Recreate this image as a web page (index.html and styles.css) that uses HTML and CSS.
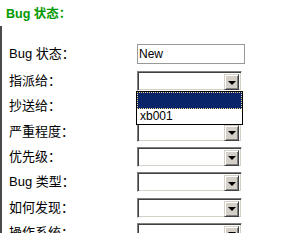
FILE: index.html
```html
<!DOCTYPE html>
<html>
<head>
<meta charset="utf-8">
<link rel="stylesheet" href="styles.css">
</head>
<body>
<div class="title">Bug 状态：</div>
<div class="panel">
  <div class="form">
    <span class="label">Bug 状态：</span>
    <div class="textbox">New</div>

    <span class="label">指派给：</span>
    <div class="cell">
      <div class="combo"><span class="btn"><span class="arrow"></span></span></div>
      <div class="dropdown">
        <div class="opt active"></div>
        <div class="opt">xb001</div>
      </div>
    </div>

    <span class="label">抄送给：</span>
    <div class="cell"><div class="combo"><span class="btn"><span class="arrow"></span></span></div></div>

    <span class="label">严重程度：</span>
    <div class="cell"><div class="combo"><span class="btn"><span class="arrow"></span></span></div></div>

    <span class="label">优先级：</span>
    <div class="cell"><div class="combo"><span class="btn"><span class="arrow"></span></span></div></div>

    <span class="label">Bug 类型：</span>
    <div class="cell"><div class="combo"><span class="btn"><span class="arrow"></span></span></div></div>

    <span class="label">如何发现：</span>
    <div class="cell"><div class="combo"><span class="btn"><span class="arrow"></span></span></div></div>

    <span class="label">操作系统：</span>
    <div class="cell"><div class="combo"><span class="btn"><span class="arrow"></span></span></div></div>
  </div>
</div>
</body>
</html>
```

FILE: styles.css
```css
html, body {
  margin: 0;
  padding: 0;
  background: #ffffff;
  overflow: hidden;
}
body {
  font-family: "Liberation Sans", "Noto Sans CJK SC", sans-serif;
  font-size: 12px;
  color: #000000;
  width: 292px;
  height: 233px;
}
.title {
  color: #009900;
  font-weight: bold;
  font-size: 12.5px;
  line-height: 14px;
  padding: 7px 6px 5px 6px;
  height: 14px;
}
.panel {
  border-left: 2px solid #4a4a4a;
  padding-top: 18px;
  height: 300px;
}
.form {
  display: grid;
  grid-template-columns: 135px 108px;
  grid-template-rows: 27px;
  grid-auto-rows: 25.33px;
  align-items: start;
}
.label {
  padding-left: 7px;
  font-size: 13px;
  line-height: 20px;
  height: 20px;
  white-space: nowrap;
}
.textbox {
  box-sizing: border-box;
  width: 108px;
  height: 20px;
  border: 1px solid #999999;
  padding-left: 1px;
  line-height: 18px;
}
.cell {
  position: relative;
  width: 105px;
  height: 20px;
}
.combo {
  box-sizing: border-box;
  width: 105px;
  height: 20px;
  border-top: 1px solid #808080;
  border-left: 1px solid #808080;
  border-right: 1px solid #ffffff;
  border-bottom: 1px solid #ffffff;
  box-shadow: inset 1px 1px 0 #404040, inset -1px -1px 0 #d4d0c8;
  display: flex;
  justify-content: flex-end;
  padding: 2px;
  background: #ffffff;
}
.btn {
  box-sizing: border-box;
  width: 15px;
  height: 16px;
  background: #d4d0c8;
  border-top: 1px solid #d4d0c8;
  border-left: 1px solid #d4d0c8;
  border-right: 1px solid #404040;
  border-bottom: 1px solid #404040;
  box-shadow: inset 1px 1px 0 #ffffff, inset -1px -1px 0 #808080;
  display: flex;
  align-items: center;
  justify-content: center;
}
.arrow {
  width: 0;
  height: 0;
  border-left: 4px solid transparent;
  border-right: 4px solid transparent;
  border-top: 4px solid #000000;
  margin-top: 1px;
}
.dropdown {
  position: absolute;
  top: 20px;
  left: -1px;
  width: 105px;
  border: 1px solid #000000;
  background: #ffffff;
  z-index: 2;
}
.opt {
  height: 15px;
  line-height: 15px;
  padding-left: 3px;
}
.opt.active {
  box-sizing: border-box;
  height: 17px;
  background: #0a246a;
  border: 1px dotted #f5db95;
}
```
